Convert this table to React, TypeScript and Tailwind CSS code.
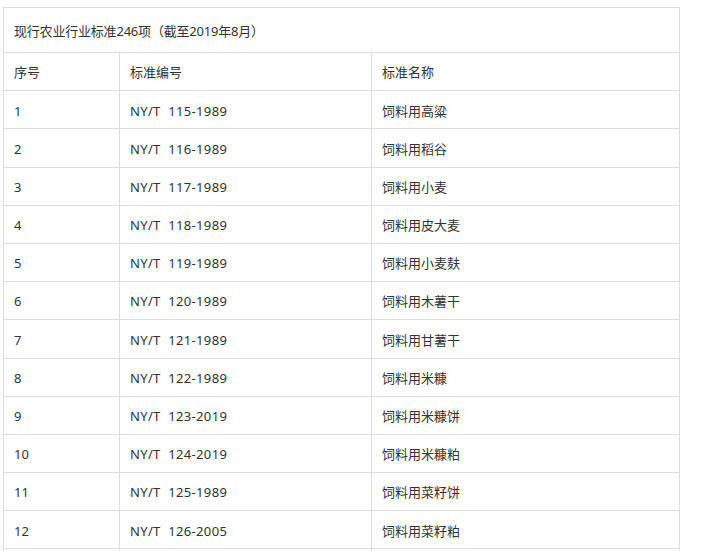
import React from 'react';

const rows: [string, string, string][] = [
  ['1', 'NY/T  115-1989', '饲料用高粱'],
  ['2', 'NY/T  116-1989', '饲料用稻谷'],
  ['3', 'NY/T  117-1989', '饲料用小麦'],
  ['4', 'NY/T  118-1989', '饲料用皮大麦'],
  ['5', 'NY/T  119-1989', '饲料用小麦麸'],
  ['6', 'NY/T  120-1989', '饲料用木薯干'],
  ['7', 'NY/T  121-1989', '饲料用甘薯干'],
  ['8', 'NY/T  122-1989', '饲料用米糠'],
  ['9', 'NY/T  123-2019', '饲料用米糠饼'],
  ['10', 'NY/T  124-2019', '饲料用米糠粕'],
  ['11', 'NY/T  125-1989', '饲料用菜籽饼'],
  ['12', 'NY/T  126-2005', '饲料用菜籽粕'],
];

const cell = 'border border-[#ddd] px-[10px] pt-[3px] pb-0 align-middle';

export default function App() {
  return (
    <div
      className="h-[551px] w-[704px] overflow-hidden bg-white pl-[3px] pt-[7px] text-[13px] text-[#333]"
      style={{ fontFamily: '"Noto Sans", "Noto Sans CJK SC", sans-serif' }}
    >
      <table className="w-[677px] table-fixed border-collapse">
        <colgroup>
          <col className="w-[116px]" />
          <col className="w-[252px]" />
          <col />
        </colgroup>
        <tbody>
          <tr className="h-[45px]">
            <td colSpan={3} className={`${cell} tracking-[-0.2px]`}>
              现行农业行业标准246项（截至2019年8月）
            </td>
          </tr>
          <tr className="h-[38.2px]">
            <td className={cell}>序号</td>
            <td className={cell}>标准编号</td>
            <td className={cell}>标准名称</td>
          </tr>
          {rows.map(([no, code, name]) => (
            <tr key={no} className="h-[38.2px]">
              <td className={cell}>{no}</td>
              <td className={`${cell} whitespace-pre tracking-[0.35px]`}>{code}</td>
              <td className={cell}>{name}</td>
            </tr>
          ))}
          <tr className="h-[38.2px]">
            <td className={cell}></td>
            <td className={cell}></td>
            <td className={cell}></td>
          </tr>
        </tbody>
      </table>
    </div>
  );
}
